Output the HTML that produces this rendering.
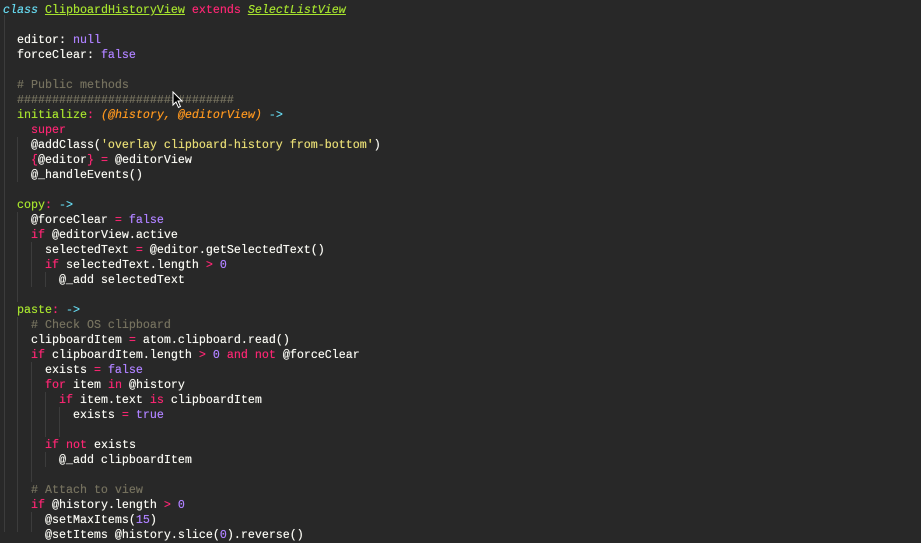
<!DOCTYPE html>
<html><head><meta charset="utf-8"><style>
html,body{margin:0;padding:0;width:921px;height:532px;overflow:hidden;background:#282828;}
#c{position:absolute;left:3px;top:3px;font-family:"Liberation Mono",monospace;font-size:11.67px;line-height:15px;color:#f8f8f2;white-space:pre;text-shadow:0 0 0.4px currentColor;}
.k{color:#f92672}.g{color:#a6e22e}.p{color:#ae81ff}.s{color:#e6db74}.cm{color:#75715e}.cy{color:#66d9ef}.o{color:#fd971f;font-style:italic}
.u{text-decoration:underline}.i{font-style:italic}
.gd{position:absolute;width:1px;background:#3c3c3c}
</style></head><body>
<div class="gd" style="left:4px;top:15px;height:517px"></div>
<div class="gd" style="left:17px;top:137px;height:45px"></div>
<div class="gd" style="left:17px;top:212px;height:90px"></div>
<div class="gd" style="left:17px;top:317px;height:215px"></div>
<div class="gd" style="left:31px;top:242px;height:45px"></div>
<div class="gd" style="left:31px;top:362px;height:120px"></div>
<div class="gd" style="left:45px;top:272px;height:15px"></div>
<div class="gd" style="left:45px;top:392px;height:45px"></div>
<div class="gd" style="left:45px;top:452px;height:15px"></div>
<div class="gd" style="left:59px;top:407px;height:30px"></div>
<div class="gd" style="left:31px;top:512px;height:20px"></div>
<div id="c"><span class="cy i">class</span> <span class="g u">ClipboardHistoryView</span> <span class="k">extends</span> <span class="g u i">SelectListView</span>

  editor: <span class="p">null</span>
  forceClear: <span class="p">false</span>

  <span class="cm"># Public methods</span>
  <span class="cm">###############################</span>
  <span class="g">initialize</span><span class="k">:</span> <span class="o">(@history, @editorView)</span> <span class="cy">-&gt;</span>
    <span class="k">super</span>
    @addClass(<span class="s">'overlay clipboard-history from-bottom'</span>)
    <span class="k">{</span>@editor<span class="k">}</span> <span class="k">=</span> @editorView
    @_handleEvents()

  <span class="g">copy</span><span class="k">:</span> <span class="cy">-&gt;</span>
    @forceClear <span class="k">=</span> <span class="p">false</span>
    <span class="k">if</span> @editorView.active
      selectedText <span class="k">=</span> @editor.getSelectedText()
      <span class="k">if</span> selectedText.length <span class="k">&gt;</span> <span class="p">0</span>
        @_add selectedText

  <span class="g">paste</span><span class="k">:</span> <span class="cy">-&gt;</span>
    <span class="cm"># Check OS clipboard</span>
    clipboardItem <span class="k">=</span> atom.clipboard.read()
    <span class="k">if</span> clipboardItem.length <span class="k">&gt;</span> <span class="p">0</span> <span class="k">and not</span> @forceClear
      exists <span class="k">=</span> <span class="p">false</span>
      <span class="k">for</span> item <span class="k">in</span> @history
        <span class="k">if</span> item.text <span class="k">is</span> clipboardItem
          exists <span class="k">=</span> <span class="p">true</span>

      <span class="k">if not</span> exists
        @_add clipboardItem

    <span class="cm"># Attach to view</span>
    <span class="k">if</span> @history.length <span class="k">&gt;</span> <span class="p">0</span>
      @setMaxItems(<span class="p">15</span>)
      @setItems @history.slice(<span class="p">0</span>).reverse()</div>
<svg style="position:absolute;left:172px;top:91px" width="12" height="18" viewBox="0 0 12 18"><path d="M1 1 L1 14 L4 11 L6.5 16.5 L8.5 15.5 L6 10 L10 10 Z" fill="#000" stroke="#fff" stroke-width="1"/></svg>
</body></html>
